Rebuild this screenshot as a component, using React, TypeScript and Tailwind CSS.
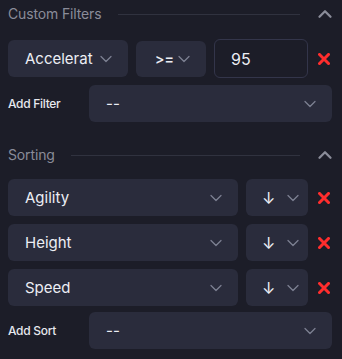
import { ChevronDown, ChevronUp } from "lucide-react";

const SectionHeader = ({ title }: { title: string }) => {
  return (
    <div className="flex items-center h-[28px]">
      <span className="text-[14px] text-[#8a8c99] leading-none tracking-[-0.01em]">{title}</span>
      <div className="flex-1 ml-4 h-px bg-[#30323f]" />
      <ChevronUp className="ml-[14px] mr-[-2px] h-[22px] w-[22px] text-[#8a8c99]" strokeWidth={2.5} />
    </div>
  );
};

const Chevron = () => <ChevronDown className="h-5 w-5 shrink-0 text-[#7d8092]" strokeWidth={1.5} />;

const Select = ({ value, className }: { value: string; className: string }) => {
  return (
    <div
      className={`flex shrink-0 items-center justify-between h-[37px] rounded-md bg-[#2a2c3c] pl-[17px] pr-[12px] ${className}`}
    >
      <span className="text-[15px] text-[#eceef4] leading-none whitespace-nowrap">{value}</span>
      <Chevron />
    </div>
  );
};

const Remove = () => (
  <div className="ml-[10px] shrink-0 flex items-center">
    <svg width="12" height="12" viewBox="0 0 12 12">
      <path d="M1.5 1.5 L10.5 10.5 M10.5 1.5 L1.5 10.5" stroke="#ff2d2d" strokeWidth="3" strokeLinecap="square" />
    </svg>
  </div>
);

const SortRow = ({ field }: { field: string }) => (
  <div className="flex items-center">
    <Select value={field} className="w-[230px]" />
    <div className="ml-2 flex shrink-0 items-center h-[37px] w-[62px] rounded-md bg-[#2a2c3c] pl-[16px] gap-[8px]">
      <span className="text-[16px] text-[#eceef4] leading-none">↓</span>
      <Chevron />
    </div>
    <Remove />
  </div>
);

export default function App() {
  return (
    <div
      className="w-[342px] h-[359px] bg-[#1c1d28] px-2 overflow-hidden"
      style={{ fontFamily: "Inter, 'Noto Sans', sans-serif" }}
    >
      <SectionHeader title="Custom Filters" />
      <div className="mt-[11px] flex items-center">
        <Select value="Accelerat" className="w-[120px] h-[36px] pr-[12px]" />
        <div className="ml-2 flex shrink-0 items-center justify-between h-[36px] w-[70px] rounded-md bg-[#2a2c3c] pl-[19px] pr-[12px]">
          <span className="text-[14px] text-[#eceef4] leading-none font-semibold">&gt;=</span>
          <Chevron />
        </div>
        <div className="ml-2 flex shrink-0 items-center h-[39px] w-[94px] rounded-md border border-[#33354a] pl-[16px]">
          <span className="text-[16px] text-[#eceef4] leading-none">95</span>
        </div>
        <Remove />
      </div>
      <div className="mt-[7px] flex items-center">
        <span className="w-[81px] text-[12px] text-[#e6e8ee] tracking-tight font-medium">Add Filter</span>
        <Select value="--" className="w-[243px]" />
      </div>

      <div className="mt-[19px]">
        <SectionHeader title="Sorting" />
      </div>
      <div className="mt-[10px] flex flex-col gap-2">
        <SortRow field="Agility" />
        <SortRow field="Height" />
        <SortRow field="Speed" />
      </div>
      <div className="mt-[6px] flex items-center">
        <span className="w-[81px] text-[12px] text-[#e6e8ee] tracking-tight font-medium">Add Sort</span>
        <Select value="--" className="w-[243px]" />
      </div>
    </div>
  );
}
